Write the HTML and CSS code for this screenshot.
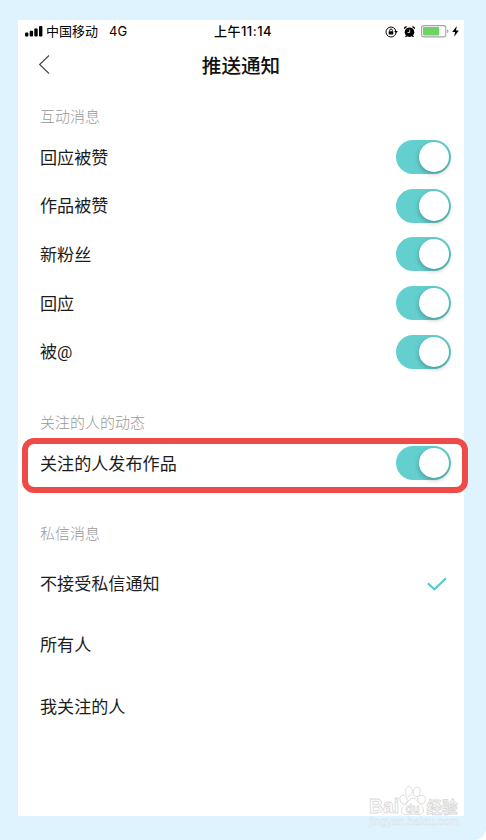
FILE: index.html
```html
<!DOCTYPE html>
<html lang="zh-CN">
<head>
  <meta charset="UTF-8">
  <meta name="viewport" content="width=device-width, initial-scale=1.0">
  <title>推送通知</title>
  <link rel="stylesheet" href="styles.css">
</head>
<body>
  <div class="frame">
    <div class="phone">
      <div class="status">
        <div class="carrier">
          <svg width="18" height="11" viewBox="0 0 18 11">
            <rect x="0" y="6.5" width="3.4" height="4" rx="1"/>
            <rect x="4.7" y="4.8" width="3.4" height="5.7" rx="1"/>
            <rect x="9.3" y="2.6" width="3.4" height="7.9" rx="1"/>
            <rect x="14" y="0" width="3.4" height="10.5" rx="1"/>
          </svg>
          <span>中国移动</span>
          <span class="network">4G</span>
        </div>
        <div class="time">上午11:14</div>
        <div class="indicators">
          <!-- rotation lock -->
          <svg width="13" height="12" viewBox="0 0 13 12">
            <path d="M10.9 5A5 5 0 1 0 9.6 9.5M9.6 9.5A5 5 0 0 0 10.9 7" fill="none" stroke="#000" stroke-width="1"/>
            <path d="M9.2 4.9h3.6L11 7.4z"/>
            <rect x="3.7" y="5.2" width="4.6" height="3.3" rx=".4"/>
            <path d="M4.7 5.4V4.3a1.3 1.3 0 0 1 2.6 0v1.1" fill="none" stroke="#000" stroke-width=".9"/>
          </svg>
          <!-- alarm -->
          <svg class="alarm" width="11" height="12" viewBox="0 0 11 12">
            <circle cx="5.5" cy="6.2" r="4.8"/>
            <path d="M.3 3.3A2 2 0 0 1 3.2.7zM10.7 3.3A2 2 0 0 0 7.8.7zM2 9.3l-1 1.5 1 .4 1.3-1.2zM9 9.3l1 1.5-1 .4-1.3-1.2z"/>
            <path d="M5.7 3.6v2.9H3.5" fill="none" stroke="#fff" stroke-width=".8"/>
          </svg>
          <svg class="battery" width="28" height="13" viewBox="0 0 28 13">
            <rect x=".6" y=".6" width="24.2" height="11.3" rx="2.4" fill="none" stroke="#a3a3a3" stroke-width="1.1"/>
            <rect x="2" y="2.1" width="16.2" height="8.3" rx=".8" fill="#6fd266"/>
            <path d="M26.1 4.3a2.2 2.2 0 0 1 0 4z" fill="#a3a3a3"/>
          </svg>
          <svg class="bolt" width="7" height="11" viewBox="0 0 7 11">
            <path d="M4.8 0L.2 6h2.9L2.1 10.8 6.9 4.6H4z"/>
          </svg>
        </div>
      </div>

      <div class="navbar">
        <svg class="back" width="12" height="20" viewBox="0 0 12 20">
          <path d="M11 .5L1.6 9.5l9.4 9" fill="none" stroke="#444" stroke-width="1.1"/>
        </svg>
        <h1>推送通知</h1>
      </div>

      <h2>互动消息</h2>
      <div class="row"><span>回应被赞</span><div class="switch"></div></div>
      <div class="row"><span>作品被赞</span><div class="switch"></div></div>
      <div class="row"><span>新粉丝</span><div class="switch"></div></div>
      <div class="row"><span>回应</span><div class="switch"></div></div>
      <div class="row"><span>被@</span><div class="switch"></div></div>

      <h2 class="following">关注的人的动态</h2>
      <div class="row marked"><span>关注的人发布作品</span><div class="switch"></div></div>

      <h2 class="private">私信消息</h2>
      <div class="row option">
        <span>不接受私信通知</span>
        <svg class="check" width="20" height="14" viewBox="0 0 20 14">
          <path d="M.8 6.3l6.6 6L19 1.2" fill="none" stroke="#55c8c9" stroke-width="2"/>
        </svg>
      </div>
      <div class="row option"><span>所有人</span></div>
      <div class="row option"><span>我关注的人</span></div>
    </div>

    <div class="watermark">
      <svg width="94" height="48" viewBox="0 0 94 48">
        <g class="logo">
          <text x="1" y="31" font-size="21" textLength="30" lengthAdjust="spacingAndGlyphs">Bai</text>
          <ellipse cx="35.5" cy="17.5" rx="3.5" ry="4.4" transform="rotate(-15 35.5 17.5)"/>
          <ellipse cx="40.8" cy="9.4" rx="3.4" ry="4.8"/>
          <ellipse cx="48.8" cy="9.8" rx="3.3" ry="4.8" transform="rotate(12 48.8 9.8)"/>
          <ellipse cx="53.4" cy="17.5" rx="4" ry="4.1"/>
          <path d="M45 16c3 0 4.5 3.5 6.500 5.500s4.500 4 4 7.500-4 4-6.500 3.500-5-.5-7.500 0-7.500 0-8-3.500 3-5.500 5-7.500S42 16 45 16z"/>
          <text class="du" x="37.5" y="31" font-size="13" textLength="14" lengthAdjust="spacingAndGlyphs">du</text>
          <text x="58.5" y="31" font-size="16" textLength="31" lengthAdjust="spacingAndGlyphs">经验</text>
        </g>
        <text class="site" x="1.5" y="43" font-size="11" textLength="89" lengthAdjust="spacingAndGlyphs">jingyan.baidu.com</text>
      </svg>
    </div>
  </div>
</body>
</html>
```

FILE: styles.css
```css
body{
  margin: 0;
  background: #fff;
  color: #1c1c1c;
  font-family: Roboto, "Noto Sans CJK SC", sans-serif;
}

.frame{
  position: relative;
  box-sizing: border-box;
  width: 486px;
  height: 840px;
  padding: 20px 22px 24px 18px;
  background: #def3fd;
  border-radius: 0 0 12px 0;
  overflow: hidden;
}

.phone{
  box-sizing: border-box;
  height: 796px;
  padding: 0 13px 0 22px;
  background: #fff;
}

svg{
  display: block;
}

.status{
  display: grid;
  grid-template-columns: 1fr auto 1fr;
  align-items: center;
  height: 23px;
  margin: 0 -8px 0 -15px;
  color: #000;
  font-family: Inter, "Noto Sans CJK SC", sans-serif;
  font-size: 13px;
  line-height: 23px;
}
.carrier, .indicators{
  display: flex;
  align-items: center;
}
.carrier span{
  margin-left: 3px;
}
.carrier .network{
  margin-left: 11px;
}
.time{
  padding-left: 2px;
  font-weight: 500;
  letter-spacing: 0.5px;
}
.indicators{
  justify-content: flex-end;
}
.alarm{
  margin-left: 6px;
}
.battery{
  margin-left: 6px;
}
.bolt{
  margin-left: 3px;
}

.navbar{
  display: grid;
  grid-template-columns: 12px 1fr 12px;
  align-items: center;
  height: 44px;
  margin-right: 7px;
  margin-left: -2px;
}
h1{
  margin: 0;
  padding-top: 3px;
  color: #111;
  font-size: 19.6px;
  font-weight: 500;
  line-height: 41px;
  text-align: center;
}

h2{
  box-sizing: border-box;
  height: 24px;
  margin: 17px 0 5px;
  padding-top: 1px;
  color: #999;
  font-size: 15px;
  font-weight: 300;
  line-height: 24px;
}
.row{
  display: flex;
  justify-content: space-between;
  align-items: center;
  height: 48.6px;
  font-size: 17.1px;
  line-height: 24px;
}
.row span{
  padding-top: 1px;
}

.switch{
  box-sizing: border-box;
  display: flex;
  justify-content: flex-end;
  width: 55px;
  height: 34px;
  padding: 2px;
  background: #63cfcf;
  border-radius: 17px;
}
.switch::before{
  content: "";
  width: 30px;
  height: 30px;
  background: #fff;
  border-radius: 50%;
  box-shadow: 0 2px 5px rgba(0,0,0,0.28);
}

.following{
  margin: 34px 0 4px;
}
.marked{
  box-sizing: border-box;
  height: 55px;
  margin: 0 -17px 0 -18px;
  padding: 0 11px 5px 12px;
  border: 6px solid #ed4a48;
  border-radius: 12px;
}
.marked span{
  padding-top: 2px;
}
.private{
  margin: 28px 0 8px;
}
.option{
  height: 61.3px;
}
.check{
  margin-right: 4px;
}

.watermark{
  position: absolute;
  left: 368px;
  top: 782px;
}
.logo{
  fill: #fff;
  stroke: #dadada;
  stroke-width: 0.9;
  font-family: "Liberation Sans", "Noto Sans CJK SC", sans-serif;
  font-weight: 700;
}
.site{
  fill: #f0f8fc;
  stroke: #d3e2ea;
  stroke-width: 0.4;
  font-family: "Liberation Sans", sans-serif;
}
```
